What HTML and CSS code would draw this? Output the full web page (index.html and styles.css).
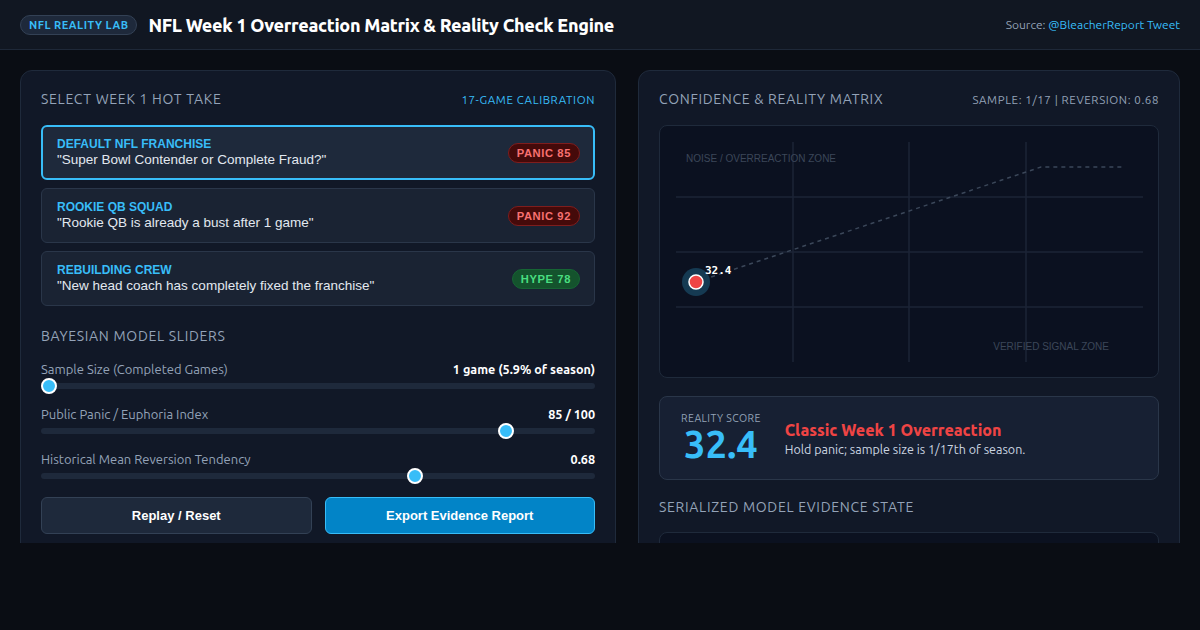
FILE: index.html
```html
<!DOCTYPE html>
<html lang="en">
<head>
    <meta charset="UTF-8">
    <meta name="viewport" content="width=device-width, initial-scale=1.0">
    <title>NFL Week 1 Overreaction Matrix</title>
    <link rel="stylesheet" href="styles.css">
</head>
<body>
    <div class="app">
        <header class="topbar">
            <div class="brand">
                <span class="lab-badge">NFL REALITY LAB</span>
                <h1>NFL Week 1 Overreaction Matrix &amp; Reality Check Engine</h1>
            </div>
            <div class="source">Source: <a href="#">@BleacherReport Tweet</a></div>
        </header>

        <main class="layout">
            <section class="panel">
                <div class="panel-head">
                    <h2>Select Week 1 Hot Take</h2>
                    <span class="panel-meta accent">17-Game Calibration</span>
                </div>

                <div class="takes">
                    <div class="take selected">
                        <div>
                            <div class="take-team">DEFAULT NFL FRANCHISE</div>
                            <div class="take-quote">"Super Bowl Contender or Complete Fraud?"</div>
                        </div>
                        <span class="pill panic">PANIC 85</span>
                    </div>
                    <div class="take">
                        <div>
                            <div class="take-team">ROOKIE QB SQUAD</div>
                            <div class="take-quote">"Rookie QB is already a bust after 1 game"</div>
                        </div>
                        <span class="pill panic">PANIC 92</span>
                    </div>
                    <div class="take">
                        <div>
                            <div class="take-team">REBUILDING CREW</div>
                            <div class="take-quote">"New head coach has completely fixed the franchise"</div>
                        </div>
                        <span class="pill hype">HYPE 78</span>
                    </div>
                </div>

                <h2 class="section-title">Bayesian Model Sliders</h2>

                <div class="slider">
                    <div class="slider-label">
                        <span>Sample Size (Completed Games)</span>
                        <strong>1 game (5.9% of season)</strong>
                    </div>
                    <input type="range" min="1" max="17" value="1">
                </div>
                <div class="slider">
                    <div class="slider-label">
                        <span>Public Panic / Euphoria Index</span>
                        <strong>85 / 100</strong>
                    </div>
                    <input type="range" min="0" max="100" value="85">
                </div>
                <div class="slider">
                    <div class="slider-label">
                        <span>Historical Mean Reversion Tendency</span>
                        <strong>0.68</strong>
                    </div>
                    <input type="range" min="0" max="1" step="0.01" value="0.68">
                </div>

                <div class="actions">
                    <button class="btn">Replay / Reset</button>
                    <button class="btn primary">Export Evidence Report</button>
                </div>
            </section>

            <section class="panel">
                <div class="panel-head">
                    <h2>Confidence &amp; Reality Matrix</h2>
                    <span class="panel-meta">Sample: 1/17 | Reversion: 0.68</span>
                </div>

                <div class="matrix">
                    <svg viewBox="0 0 498 251" width="498" height="251">
                        <!-- grid -->
                        <g stroke="#1c2536" stroke-width="1.5">
                            <line x1="133" y1="16" x2="133" y2="236"/>
                            <line x1="249" y1="16" x2="249" y2="236"/>
                            <line x1="366" y1="16" x2="366" y2="236"/>
                            <line x1="16" y1="71" x2="483" y2="71"/>
                            <line x1="16" y1="126" x2="483" y2="126"/>
                            <line x1="16" y1="181" x2="483" y2="181"/>
                        </g>
                        <text class="zone" x="26" y="36">NOISE / OVERREACTION ZONE</text>
                        <text class="zone" x="449" y="224" text-anchor="end">VERIFIED SIGNAL ZONE</text>
                        <polyline points="36,156 381,41 463,41" fill="none" stroke="#3b4759" stroke-width="1.5" stroke-dasharray="4 4"/>
                        <circle cx="36" cy="156" r="14" fill="#153a52"/>
                        <circle cx="36" cy="156" r="7" fill="#ef4444" stroke="#ffffff" stroke-width="1.5"/>
                        <text class="point-label" x="45" y="148">32.4</text>
                    </svg>
                </div>

                <div class="score-card">
                    <div class="score">
                        <div class="score-label">Reality Score</div>
                        <div class="score-value">32.4</div>
                    </div>
                    <div>
                        <div class="verdict">Classic Week 1 Overreaction</div>
                        <div class="verdict-note">Hold panic; sample size is 1/17th of season.</div>
                    </div>
                </div>

                <h2 class="section-title tight">Serialized Model Evidence State</h2>
                <div class="evidence"></div>
            </section>
        </main>
    </div>
</body>
</html>
```

FILE: styles.css
```css
body {
    margin: 0;
    background-color: #0a0d14;
    color: #e2e8f0;
    font-family: Ubuntu, system-ui, "Noto Sans", sans-serif;
}
.app {
    height: 543px;
    overflow: hidden;
}
.topbar {
    height: 49px;
    display: flex;
    align-items: center;
    justify-content: space-between;
    padding: 0 20px;
    background-color: #111722;
    border-bottom: 1px solid #1e2838;
}
.brand {
    display: flex;
    align-items: center;
    gap: 11px;
}
.lab-badge {
    display: inline-block;
    padding: 3px 8px;
    border: 1px solid #334155;
    border-radius: 999px;
    background-color: #1e293b;
    color: #38bdf8;
    font-size: 11px;
    font-weight: bold;
    letter-spacing: 0.5px;
}
h1 {
    margin: 0;
    font-size: 18px;
    font-weight: 800;
    color: #ffffff;
    letter-spacing: -0.3px;
}
.source {
    font-size: 12px;
    color: #94a3b8;
}
.source a {
    color: #38bdf8;
    text-decoration: none;
}
.layout {
    display: grid;
    grid-template-columns: 1.1fr 1fr;
    gap: 22px;
    padding: 20px 20px 0;
}
.panel {
    background-color: #111827;
    border: 1px solid #1f2a3b;
    border-radius: 12px;
    padding: 20px;
    min-height: 560px;
}
.panel-head {
    display: flex;
    align-items: center;
    justify-content: space-between;
    margin-bottom: 17px;
}
h2 {
    margin: 0;
    font-size: 14px;
    line-height: 17px;
    font-weight: normal;
    text-transform: uppercase;
    letter-spacing: 0.7px;
    color: #94a3b8;
}
.panel-meta {
    font-size: 11.5px;
    text-transform: uppercase;
    letter-spacing: 0.6px;
    color: #94a3b8;
}
.panel-meta.accent {
    color: #38bdf8;
}
.takes {
    display: flex;
    flex-direction: column;
    gap: 8px;
}
.take {
    display: flex;
    align-items: center;
    justify-content: space-between;
    padding: 11px 14px 11px 15px;
    background-color: #1a2333;
    border: 1px solid #2a3649;
    border-radius: 6px;
    font-family: "Liberation Sans", Arial, sans-serif;
}
.take.selected {
    padding: 10px 13px 10px 14px;
    border: 2px solid #38bdf8;
    background-color: #1e293b;
}
.take-team {
    font-size: 12px;
    line-height: 15px;
    font-weight: bold;
    color: #38bdf8;
}
.take-quote {
    font-size: 13.5px;
    line-height: 16px;
    color: #e2e8f0;
}
.pill {
    padding: 3px 8px;
    border-radius: 999px;
    font-size: 11.2px;
    font-weight: bold;
    letter-spacing: 0.6px;
}
.pill.panic {
    background-color: #450a0a;
    border: 1px solid #7f1d1d;
    color: #f87171;
}
.pill.hype {
    background-color: #14532d;
    border: 1px solid #166534;
    color: #4ade80;
}
.section-title {
    margin-top: 22px;
    margin-bottom: 17px;
}
.section-title.tight {
    margin-top: 19px;
    margin-bottom: 16px;
}
.slider {
    margin-bottom: 18px;
}
.slider-label {
    display: flex;
    justify-content: space-between;
    font-size: 13px;
    line-height: 15px;
    color: #94a3b8;
    margin-bottom: 6px;
}
.slider-label strong {
    font-size: 12.6px;
    color: #ffffff;
}
input[type=range] {
    -webkit-appearance: none;
    appearance: none;
    display: block;
    width: 100%;
    height: 6px;
    margin: 0;
    border-radius: 3px;
    background-color: #1e293b;
}
input[type=range]::-webkit-slider-thumb {
    -webkit-appearance: none;
    box-sizing: border-box;
    width: 16px;
    height: 16px;
    border-radius: 50%;
    background-color: #38bdf8;
    border: 2px solid #ffffff;
}
.actions {
    display: grid;
    grid-template-columns: 1fr 1fr;
    gap: 13px;
}
.btn {
    padding: 10px;
    font-family: "Liberation Sans", Arial, sans-serif;
    font-size: 13px;
    line-height: 15px;
    font-weight: bold;
    color: #ffffff;
    background-color: #1e293b;
    border: 1px solid #334155;
    border-radius: 6px;
    cursor: pointer;
}
.btn.primary {
    background-color: #0284c7;
    border-color: #38bdf8;
}
.matrix {
    background-color: #0b1120;
    border: 1px solid #1f2a3b;
    border-radius: 8px;
    height: 251px;
}
.matrix svg {
    display: block;
}
.zone {
    font-family: "Liberation Sans", Arial, sans-serif;
    font-size: 10px;
    fill: #3c4759;
}
.point-label {
    font-family: "DejaVu Sans Mono", monospace;
    font-size: 11px;
    font-weight: bold;
    fill: #ffffff;
}
.score-card {
    display: flex;
    align-items: center;
    gap: 24px;
    margin-top: 18px;
    padding: 15px 21px;
    background-color: #172033;
    border: 1px solid #2a3649;
    border-radius: 8px;
}
.score {
    text-align: center;
}
.score-label {
    font-size: 10.5px;
    line-height: 12px;
    text-transform: uppercase;
    letter-spacing: 0.4px;
    color: #94a3b8;
}
.score-value {
    font-size: 38px;
    line-height: 40px;
    font-weight: bold;
    color: #38bdf8;
}
.verdict {
    font-size: 16px;
    font-weight: 800;
    color: #ef4444;
    margin-bottom: 3px;
}
.verdict-note {
    font-size: 12.5px;
    color: #cbd5e1;
}
.evidence {
    margin-top: 16px;
    height: 120px;
    background-color: #0b1120;
    border: 1px solid #1f2a3b;
    border-radius: 8px;
}
```
